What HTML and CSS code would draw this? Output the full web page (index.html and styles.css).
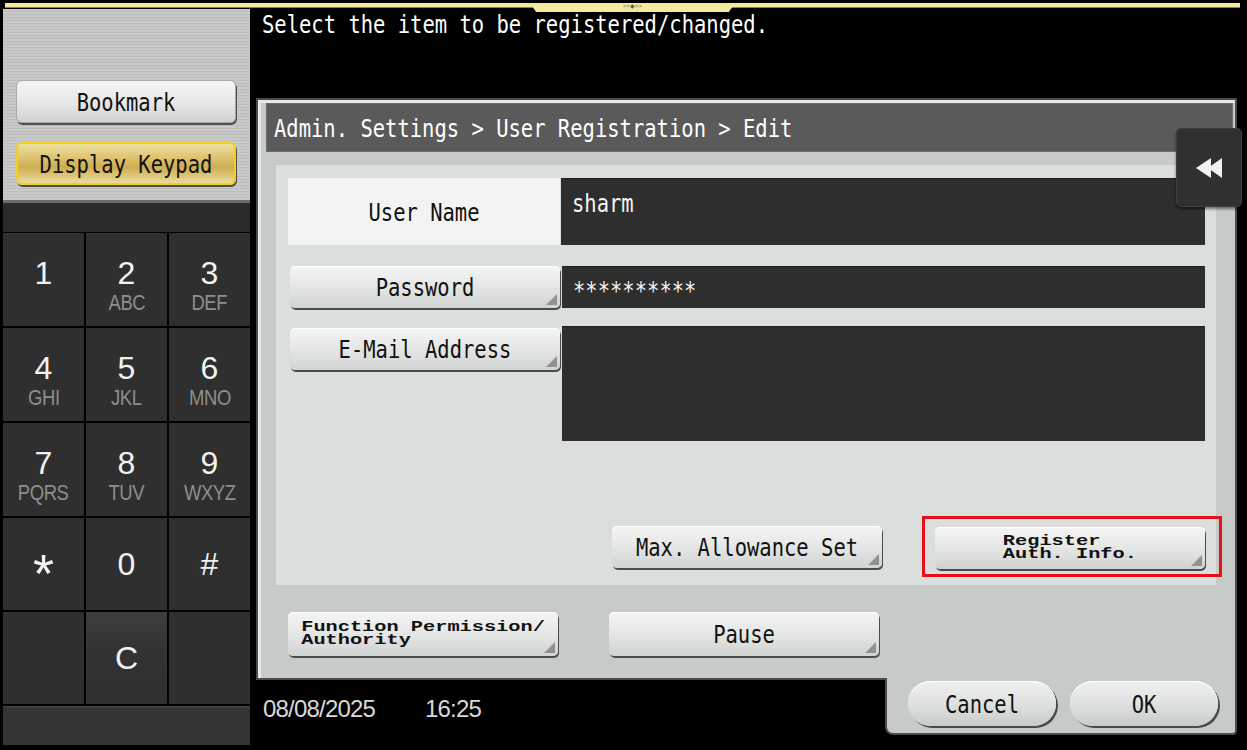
FILE: index.html
```html
<!DOCTYPE html>
<html lang="en">
<head>
<meta charset="utf-8">
<title>Admin. Settings - User Registration - Edit</title>
<link rel="stylesheet" href="styles.css">
</head>
<body>
<div class="screen">
  <div class="topbar">
    <div class="topline"></div>
    <div class="toptab">&lt;&lt;&#9670;&gt;&gt;</div>
  </div>
  <div class="main">
    <aside class="side">
      <div class="side-top">
        <button class="sbtn"><span class="bm">Bookmark</span></button>
        <button class="sbtn sbtn-active"><span class="bm">Display Keypad</span></button>
      </div>
      <div class="side-sep"></div>
      <div class="keypad">
        <div class="key key-l"><span class="d">1</span><span class="l">&nbsp;</span></div>
        <div class="key key-l"><span class="d">2</span><span class="l">ABC</span></div>
        <div class="key key-l"><span class="d">3</span><span class="l">DEF</span></div>
        <div class="key key-l"><span class="d">4</span><span class="l">GHI</span></div>
        <div class="key key-l"><span class="d">5</span><span class="l">JKL</span></div>
        <div class="key key-l"><span class="d">6</span><span class="l">MNO</span></div>
        <div class="key key-l"><span class="d">7</span><span class="l">PQRS</span></div>
        <div class="key key-l"><span class="d">8</span><span class="l">TUV</span></div>
        <div class="key key-l"><span class="d">9</span><span class="l">WXYZ</span></div>
        <div class="key"><span class="d star">*</span></div>
        <div class="key"><span class="d">0</span></div>
        <div class="key"><span class="d">#</span></div>
        <div class="key"></div>
        <div class="key key-c"><span class="d">C</span></div>
        <div class="key"></div>
      </div>
      <div class="side-bottom"></div>
    </aside>

    <section class="work">
      <div class="message"><span class="bm">Select the item to be registered/changed.</span></div>

      <div class="panel">
        <div class="panel-head"><span class="bm">Admin. Settings &gt; User Registration &gt; Edit</span></div>
        <button class="back" aria-label="Back">
          <svg width="27" height="20" viewBox="0 0 27 20"><polygon points="0,10 15,0 15,20" fill="#f2f2f2"/><polygon points="12,10 26,0 26,20" fill="#f2f2f2"/></svg>
        </button>

        <div class="content">
          <div class="row row-name">
            <div class="label-cell"><span class="bm">User Name</span></div>
            <div class="field"><span class="bm">sharm</span></div>
          </div>
          <div class="row row-pw">
            <button class="btn btn-label"><span class="bm">Password</span></button>
            <div class="field"><span class="bm">**********</span></div>
          </div>
          <div class="row row-mail">
            <button class="btn btn-label"><span class="bm">E-Mail Address</span></button>
            <div class="field"></div>
          </div>
          <div class="row row-act">
            <button class="btn btn-max"><span class="bm">Max. Allowance Set</span></button>
            <div class="highlight">
              <button class="btn"><span class="sm">Register<br>Auth. Info.</span></button>
            </div>
          </div>
        </div>

        <div class="lower">
          <button class="btn btn-tall"><span class="sm">Function Permission/<br>Authority</span></button>
          <button class="btn btn-tall"><span class="bm">Pause</span></button>
        </div>
      </div>

      <div class="footer">
        <div class="datetime"><span class="date">08/08/2025</span><span>16:25</span></div>
        <div class="actions">
          <button class="pill"><span class="bm">Cancel</span></button>
          <button class="pill"><span class="bm">OK</span></button>
        </div>
      </div>
    </section>
  </div>
</div>
</body>
</html>
```
FILE: styles.css
```css
* { box-sizing: border-box; }

html, body {
  margin: 0;
  padding: 0;
  background: #000;
}

body {
  width: 1247px;
  height: 750px;
  overflow: hidden;
  font-family: "DejaVu Sans Mono", monospace;
}

button {
  font: inherit;
  margin: 0;
  padding: 0;
  cursor: pointer;
}

.screen {
  width: 1247px;
  height: 750px;
  background: #000;
}

/* bitmap-like label font */
.bm {
  display: inline-block;
  font-family: "DejaVu Sans Mono", monospace;
  font-size: 20.5px;
  line-height: 24px;
  transform: scaleY(1.25);
  white-space: pre;
}

.sm {
  display: inline-block;
  font-family: "Liberation Mono", monospace;
  font-weight: bold;
  font-size: 14.5px;
  line-height: 13px;
  text-align: left;
  transform: scaleX(1.4);
  white-space: nowrap;
}

/* top strip */
.topbar {
  position: relative;
  height: 9px;
  padding-top: 3px;
}

.topline {
  height: 5px;
  margin: 0 7px 0 5px;
  background: #f3e9a0;
  border-bottom: 1px solid #8d8455;
}

.toptab {
  position: absolute;
  left: 530px;
  top: 3px;
  width: 205px;
  height: 9px;
  background: #f3e9a0;
  clip-path: polygon(0 0, 100% 0, 97% 100%, 3% 100%);
  font-family: "Liberation Sans", sans-serif;
  font-size: 6px;
  line-height: 6px;
  color: #6b6040;
  text-align: center;
}

.main {
  display: flex;
  height: 741px;
}

/* left sidebar */
.side {
  width: 247px;
  margin-left: 3px;
  display: flex;
  flex-direction: column;
}

.side-top {
  height: 191px;
  padding: 71px 14px 0 13px;
  background: repeating-linear-gradient(to bottom, #c9c9c9 0, #c9c9c9 2px, #bdbdbd 2px, #bdbdbd 3px);
  display: flex;
  flex-direction: column;
  gap: 19px;
}

.sbtn {
  height: 43px;
  border: 1px solid #a8a8a8;
  border-radius: 6px;
  background: linear-gradient(to bottom, #f6f6f6 0%, #e6e6e6 55%, #d2d2d2 100%);
  box-shadow: 1px 2px 0 #4e4e4e;
  color: #111;
  display: flex;
  align-items: center;
  justify-content: center;
}

.sbtn-active {
  border: 2px solid #f1d21a;
  background: linear-gradient(to bottom, #efe1a0 0%, #d8ba64 45%, #cfae52 60%, #eadb9c 100%);
}

.side-sep {
  height: 32px;
  background: #2b2b2b;
  border-top: 3px solid #6c6c6c;
}

.keypad {
  display: grid;
  grid-template-columns: repeat(3, 1fr);
  grid-template-rows: 93px 93px 93px 92px 92px;
  gap: 2px;
  padding-top: 1px;
  background: #000;
}

.key {
  background: #2f2f2f;
  display: flex;
  flex-direction: column;
  align-items: center;
  justify-content: center;
  font-family: "Liberation Sans", Arial, sans-serif;
  color: #f2f2f2;
}

.key-l {
  padding-top: 12px;
}

.key-c {
  background: linear-gradient(to bottom, #3e3e3e 0%, #333 40%, #2f2f2f 100%);
}

.key .d {
  font-size: 32px;
  line-height: 28px;
}

.key .d.star {
  font-size: 54px;
  line-height: 28px;
  padding-top: 18px;
}

.key .l {
  display: inline-block;
  margin-top: 5px;
  font-size: 22px;
  line-height: 21px;
  letter-spacing: -0.5px;
  color: #8e8e8e;
  transform: scaleX(0.84);
}

.side-bottom {
  height: 39px;
  margin-top: 2px;
  background: #343434;
  border-top: 1px solid #4a4a4a;
}

/* work area */
.work {
  flex: 1;
  display: flex;
  flex-direction: column;
}

.message {
  height: 89px;
  padding: 3px 0 0 12px;
  color: #fff;
}

.panel {
  position: relative;
  width: 981px;
  height: 582px;
  margin-left: 6px;
  padding: 3px 2px 0 8px;
  background: #c6cbc8;
  border: 2px solid #4c4c4c;
  box-shadow: inset 3px 3px 0 #e6e9e7;
}

.panel-head {
  height: 49px;
  padding-left: 7px;
  background: #5a5a5a;
  border: 1px solid #6e6e6e;
  color: #fff;
  display: flex;
  align-items: center;
}

.back {
  position: absolute;
  left: 918px;
  top: 28px;
  width: 66px;
  height: 79px;
  background: #303030;
  border: 1px solid #404040;
  border-radius: 5px;
  box-shadow: 0 2px 3px rgba(0, 0, 0, 0.5);
  display: flex;
  align-items: center;
  justify-content: center;
}

.content {
  width: 940px;
  height: 420px;
  margin: 13px 0 0 10px;
  padding: 13px 11px 0 12px;
  background: #dbdfdc;
}

.row {
  display: flex;
}

.row-name {
  height: 67px;
}

.label-cell {
  width: 272px;
  background: #f2f3f2;
  color: #111;
  display: flex;
  align-items: center;
  justify-content: center;
}

.field {
  flex: 1;
  margin-left: 1px;
  padding: 12px 11px 0;
  background: #2e2e2e;
  border-top: 1px solid #1c1c1c;
  color: #f4f4f4;
}

.row-pw {
  height: 42px;
  margin-top: 21px;
}

.row-pw .field {
  margin-left: 2px;
  padding-top: 11px;
}

.row-mail {
  height: 115px;
  margin-top: 18px;
  align-items: flex-start;
}

.row-mail .btn {
  margin-top: 2px;
}

.row-mail .field {
  height: 115px;
  margin-left: 2px;
}

.btn-label {
  width: 268px;
  margin-left: 2px;
}

.row-act {
  margin-top: 75px;
  margin-right: -17px;
  justify-content: flex-end;
  align-items: center;
}

.btn-max {
  margin-right: 40px;
}

.highlight {
  padding: 8px 14px 5px 10px;
  border: 3px solid #e5101c;
}

/* standard gray button */
.btn {
  position: relative;
  width: 270px;
  height: 42px;
  border: none;
  border-radius: 5px;
  background: linear-gradient(to bottom, #f4f5f4 0%, #e6e8e7 45%, #d0d4d1 100%);
  box-shadow: 1px 2px 0 #4b4b4b, inset 0 1px 0 #fff;
  color: #111;
  display: flex;
  align-items: center;
  justify-content: center;
}

.btn::after {
  content: "";
  position: absolute;
  right: 3px;
  bottom: 3px;
  border-left: 11px solid transparent;
  border-bottom: 11px solid #8f9290;
}

.btn-tall {
  height: 44px;
}

.lower {
  display: flex;
  gap: 51px;
  padding: 27px 0 0 22px;
}

/* footer */
.footer {
  display: flex;
  height: 65px;
}

.datetime {
  flex: 1;
  padding: 15px 0 0 13px;
  font-family: "Liberation Sans", Arial, sans-serif;
  font-size: 24px;
  line-height: 27px;
  letter-spacing: -0.8px;
  color: #d9d9d9;
}

.datetime .date {
  display: inline-block;
  width: 162px;
}

.actions {
  position: relative;
  width: 352px;
  height: 57px;
  margin: -2px 10px 0 0;
  padding: 3px 0 0 21px;
  background: #c6cbc8;
  border: 2px solid #4c4c4c;
  border-top: none;
  border-radius: 0 0 4px 8px;
  display: flex;
  gap: 14px;
}

.pill {
  width: 148px;
  height: 45px;
  border: none;
  border-radius: 23px;
  background: linear-gradient(to bottom, #eff1f0 0%, #e0e3e1 45%, #c8ccc9 100%);
  box-shadow: 2px 2px 0 #4a4a4a, inset 0 1px 0 #fff;
  color: #111;
  display: flex;
  align-items: center;
  justify-content: center;
}
```
